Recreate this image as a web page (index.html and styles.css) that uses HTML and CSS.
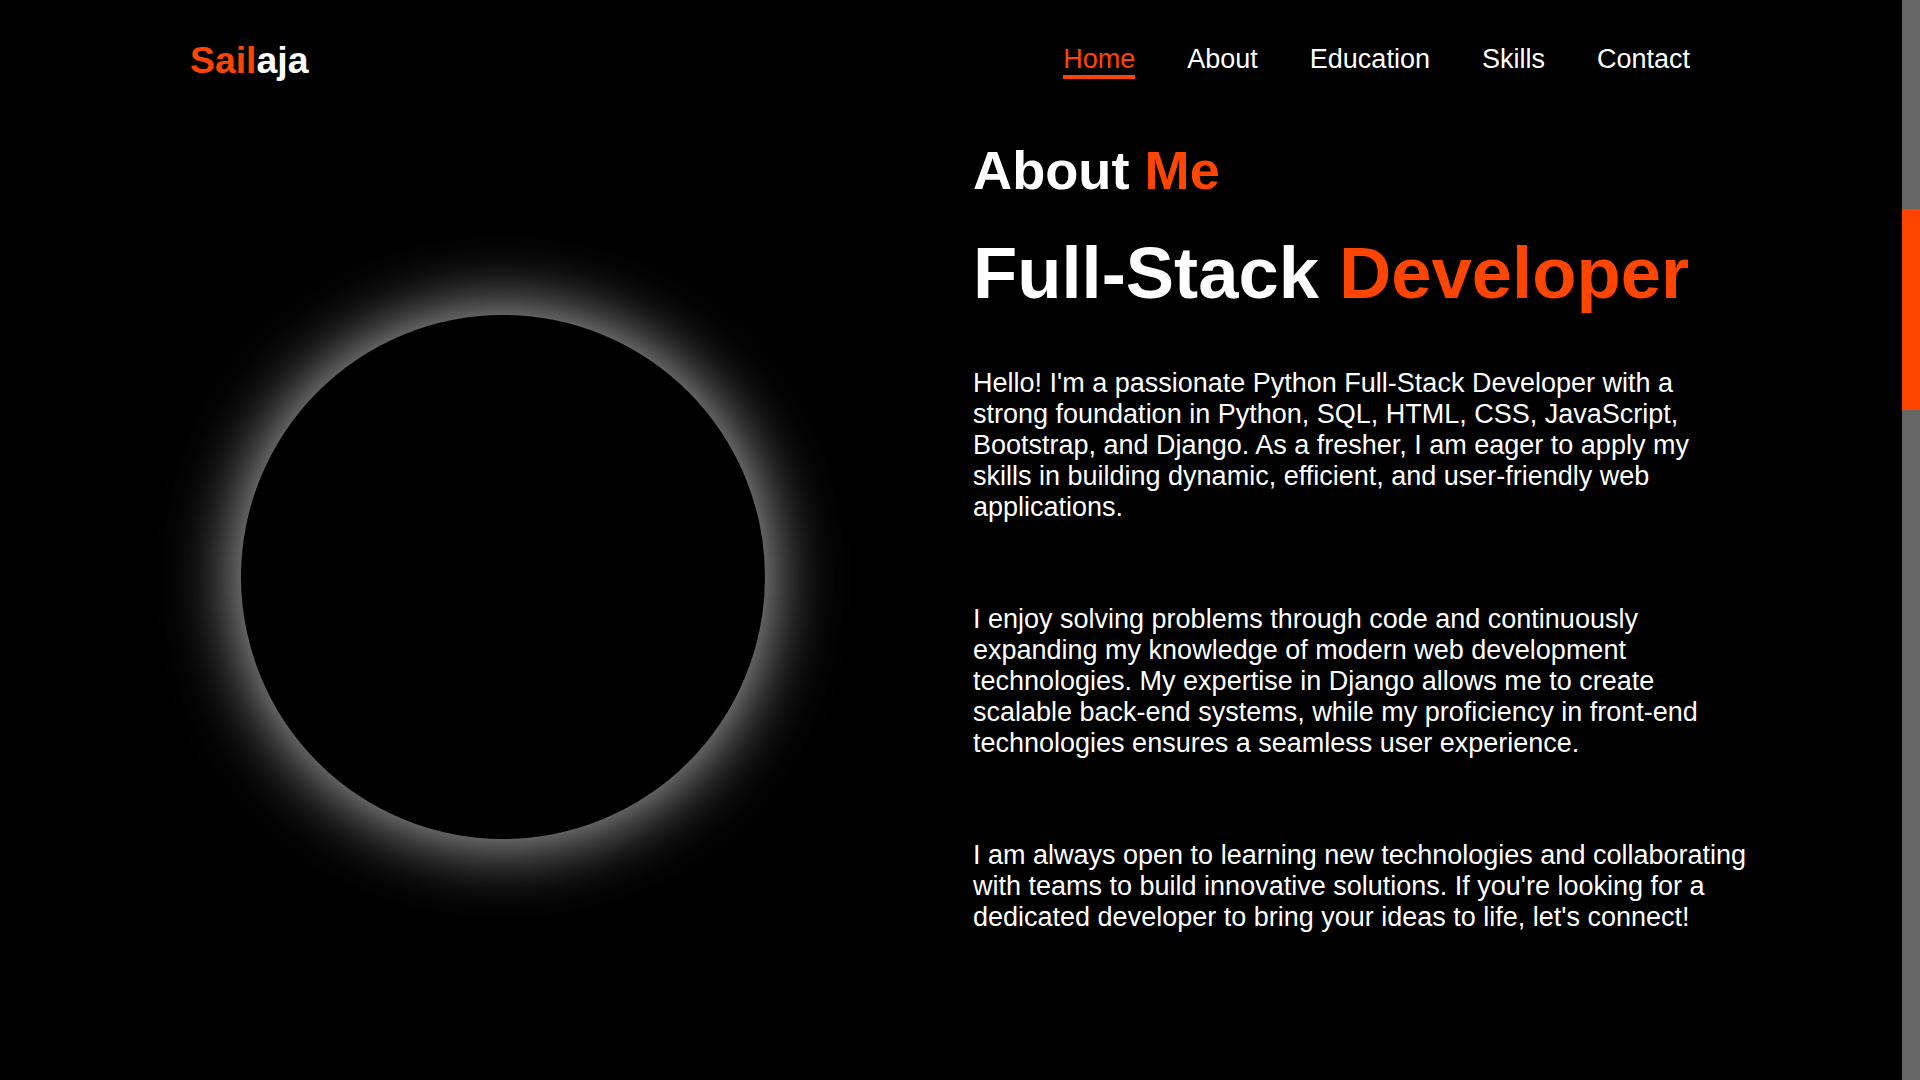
FILE: index.html
```html
<!DOCTYPE html>
<html lang="en">
<head>
<meta charset="utf-8">
<title>Sailaja - About</title>
<link rel="stylesheet" href="styles.css">
</head>
<body>
<div class="page">
  <header class="header">
    <div class="logo"><span class="accent">Sail</span>aja</div>
    <nav class="nav">
      <a class="nav-link active" href="#home">Home</a>
      <a class="nav-link" href="#about">About</a>
      <a class="nav-link" href="#education">Education</a>
      <a class="nav-link" href="#skills">Skills</a>
      <a class="nav-link" href="#contact">Contact</a>
    </nav>
  </header>
  <section class="about" id="about">
    <div class="photo"></div>
    <div class="about-text">
      <h2 class="about-title">About <span class="accent">Me</span></h2>
      <h1 class="role">Full-Stack <span class="accent">Developer</span></h1>
      <p class="para">Hello! I'm a passionate Python Full-Stack Developer with a strong foundation in Python, SQL, HTML, CSS, JavaScript, Bootstrap, and Django. As a fresher, I am eager to apply my skills in building dynamic, efficient, and user-friendly web applications.</p>
      <p class="para">I enjoy solving problems through code and continuously expanding my knowledge of modern web development technologies. My expertise in Django allows me to create scalable back-end systems, while my proficiency in front-end technologies ensures a seamless user experience.</p>
      <p class="para">I am always open to learning new technologies and collaborating with teams to build innovative solutions. If you're looking for a dedicated developer to bring your ideas to life, let's connect!</p>
    </div>
  </section>
</div>
<div class="scrollbar"><div class="thumb"></div></div>
</body>
</html>
```
FILE: styles.css
```css
html, body {
  margin: 0;
  padding: 0;
  height: 100%;
  overflow: hidden;
}
body {
  background: #000;
  color: #fff;
  font-family: "Liberation Sans", Arial, sans-serif;
  display: flex;
}
.page {
  flex: 1;
  min-width: 0;
}
.accent {
  color: #ff4500;
}
.header {
  height: 120px;
  display: flex;
  align-items: center;
  justify-content: space-between;
  padding: 0 212px 0 190px;
}
.logo {
  font-size: 37.4px;
  font-weight: bold;
  margin-top: 0;
}
.nav {
  display: flex;
  gap: 52px;
  margin-top: 2px;
}
.nav-link {
  font-size: 27px;
  color: #fff;
  text-decoration: none;
  border-bottom: 4px solid transparent;
  line-height: normal;
}
.nav-link.active {
  color: #ff4500;
  border-bottom-color: #ff4500;
}
.about {
  display: flex;
  align-items: flex-start;
  padding-left: 241px;
  gap: 208px;
}
.photo {
  width: 524px;
  height: 524px;
  flex: none;
  border-radius: 50%;
  background: #000;
  margin-top: 195px;
  box-shadow: 0 0 75px rgba(255, 255, 255, 0.8);
}
.about-text {
  width: 778px;
  margin-top: 19px;
}
.about-title {
  margin: 0;
  font-size: 54.2px;
  font-weight: bold;
  line-height: normal;
}
.role {
  margin: 30px 0 0;
  font-size: 72.4px;
  font-weight: bold;
  line-height: normal;
}
.para {
  margin: 54px 0 0;
  font-size: 27px;
  line-height: normal;
}
.para + .para {
  margin-top: 81px;
}
.scrollbar {
  width: 18px;
  flex: none;
  background: #666;
}
.thumb {
  margin-top: 209px;
  height: 201px;
  background: #ff4500;
}
```
